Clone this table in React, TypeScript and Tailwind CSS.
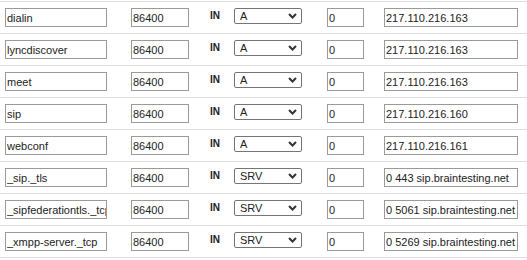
import { useState } from "react";

type DnsRecord = {
  name: string;
  ttl: string;
  type: "A" | "SRV";
  prio: string;
  data: string;
};

const records: DnsRecord[] = [
  { name: "dialin", ttl: "86400", type: "A", prio: "0", data: "217.110.216.163" },
  { name: "lyncdiscover", ttl: "86400", type: "A", prio: "0", data: "217.110.216.163" },
  { name: "meet", ttl: "86400", type: "A", prio: "0", data: "217.110.216.163" },
  { name: "sip", ttl: "86400", type: "A", prio: "0", data: "217.110.216.160" },
  { name: "webconf", ttl: "86400", type: "A", prio: "0", data: "217.110.216.161" },
  { name: "_sip._tls", ttl: "86400", type: "SRV", prio: "0", data: "0 443 sip.braintesting.net" },
  { name: "_sipfederationtls._tcp", ttl: "86400", type: "SRV", prio: "0", data: "0 5061 sip.braintesting.net" },
  { name: "_xmpp-server._tcp", ttl: "86400", type: "SRV", prio: "0", data: "0 5269 sip.braintesting.net" },
];

const inputCls =
  "block h-[19px] border border-[#9a9a9a] bg-white pl-[1px] pr-0 text-[11px] leading-none text-[#222] outline-none";

function RecordRow({ rec }: { rec: DnsRecord }) {
  const [type, setType] = useState(rec.type);
  return (
    <div className="flex h-[32px] items-start border-t border-[#dedede] pt-[6px] pl-[5px]">
      <input className={`${inputCls} w-[102px]`} defaultValue={rec.name} />
      <input className={`${inputCls} ml-[24px] w-[58px]`} defaultValue={rec.ttl} />
      <span className="ml-[21px] mt-[1px] block w-[11px] text-[10px] leading-[14px] font-bold text-[#222]">
        IN
      </span>
      <div className="relative ml-[13px] h-[16px] w-[68px]">
        <select
          value={type}
          onChange={(e) => setType(e.target.value as DnsRecord["type"])}
          className="block h-[16px] w-full appearance-none rounded-[2px] border border-[#767676] bg-white py-0 pl-[5px] text-[11px] leading-[14px] text-[#222] outline-none"
        >
          <option value="A">A</option>
          <option value="SRV">SRV</option>
        </select>
        <svg
          className="pointer-events-none absolute right-[5px] top-[5px]"
          width="9"
          height="6"
          viewBox="0 0 9 6"
        >
          <path d="M1 1l3.5 3.5L8 1" fill="none" stroke="#333" strokeWidth="2" />
        </svg>
      </div>
      <input className={`${inputCls} ml-[25px] w-[37px]`} defaultValue={rec.prio} />
      <input className={`${inputCls} ml-[20px] w-[134px]`} defaultValue={rec.data} />
    </div>
  );
}

export default function App() {
  return (
    <div
      className="h-[260px] w-[527px] bg-white pt-[1px]"
      style={{ fontFamily: '"Liberation Sans", Arial, sans-serif' }}
    >
      <div className="border-b border-[#dedede]">
        {records.map((r) => (
          <RecordRow key={r.name} rec={r} />
        ))}
      </div>
    </div>
  );
}
